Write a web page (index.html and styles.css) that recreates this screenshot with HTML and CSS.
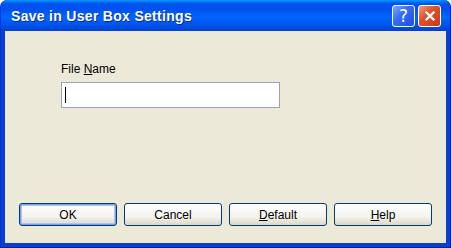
FILE: index.html
```html
<!DOCTYPE html>
<html lang="en">
<head>
    <meta charset="UTF-8">
    <title>Save in User Box Settings</title>
    <link rel="stylesheet" href="styles.css">
</head>
<body>
    <div class="window">
        <div class="title-bar">
            <span class="title">Save in User Box Settings</span>
            <div class="title-buttons">
                <div class="tb-btn help-btn">?</div>
                <div class="tb-btn close-btn">
                    <svg viewBox="0 0 21 21">
                        <path d="M6 6 L15 15 M15 6 L6 15"/>
                    </svg>
                </div>
            </div>
        </div>

        <div class="client">
            <div class="field">
                <label>File <u>N</u>ame</label>
                <div class="text-box"><span class="caret"></span></div>
            </div>

            <div class="buttons">
                <button class="btn default-btn">OK</button>
                <button class="btn">Cancel</button>
                <button class="btn"><u>D</u>efault</button>
                <button class="btn"><u>H</u>elp</button>
            </div>
        </div>
    </div>
</body>
</html>
```

FILE: styles.css
```css
* {
    margin: 0;
    padding: 0;
    box-sizing: border-box;
}

body {
    width: 451px;
    height: 248px;
    overflow: hidden;
    background: #fff;
    font-family: 'Liberation Sans', Arial, sans-serif;
    font-size: 12px;
    color: #000;
}

.window {
    width: 451px;
    height: 248px;
    display: flex;
    flex-direction: column;
    background: #0841d0;
    border-radius: 7px 7px 0 0;
    padding: 0 4px 4px;
    border-left: 1px solid #0831d9;
    border-right: 1px solid #001ea0;
    border-bottom: 1px solid #001ea0;
}

.title-bar {
    height: 31px;
    margin: 0 -4px;
    padding: 0 9px 0 10px;
    display: flex;
    align-items: center;
    justify-content: space-between;
    border-radius: 7px 7px 0 0;
    background: linear-gradient(to bottom, #0997ff 0%, #0053ee 12%, #0050ee 30%, #0066ff 55%, #0053ee 80%, #0043cf 100%);
}

.title {
    color: #fff;
    font-family: 'Liberation Sans', Arial, sans-serif;
    font-weight: bold;
    font-size: 14px;
    letter-spacing: 0.3px;
    text-shadow: 1px 1px 0 #0a2a9a;
}

.title-buttons {
    display: flex;
    gap: 3px;
}

.tb-btn {
    width: 23px;
    height: 22px;
    border: 1px solid #fff;
    border-radius: 3px;
    display: flex;
    align-items: center;
    justify-content: center;
}

.help-btn {
    background: linear-gradient(135deg, #7ea8ff 0%, #3a6ef6 40%, #1c4de0 100%);
    color: #fff;
    font-family: 'DejaVu Sans', sans-serif;
    font-size: 17px;
}

.close-btn {
    background: linear-gradient(135deg, #f39a7c 0%, #e0522e 40%, #c43b1a 100%);
}

.close-btn svg {
    width: 20px;
    height: 20px;
    stroke: #fff;
    stroke-width: 2.4;
    fill: none;
}

.client {
    flex: 1;
    background: #ece9d8;
    display: flex;
    flex-direction: column;
    justify-content: space-between;
    padding: 31px 14px 17px 14px;
}

.field {
    padding-left: 42px;
    display: flex;
    flex-direction: column;
    gap: 6px;
}

.text-box {
    width: 219px;
    height: 26px;
    background: #fff;
    border: 1px solid #9aa5b3;
    padding: 4px 3px;
}

.caret {
    display: block;
    width: 1px;
    height: 16px;
    background: #000;
}

.buttons {
    display: flex;
    gap: 7px;
}

.btn {
    width: 98px;
    height: 23px;
    font-family: 'Liberation Sans', Arial, sans-serif;
    font-size: 12px;
    color: #000;
    border: 1px solid #003c74;
    border-radius: 3px;
    background: linear-gradient(to bottom, #fff 0%, #f4f3ee 60%, #dcd8c8 100%);
}

.default-btn {
    box-shadow: inset 0 0 0 1px #7aa0ea, inset 0 0 0 2px #aac4f5;
}
```
